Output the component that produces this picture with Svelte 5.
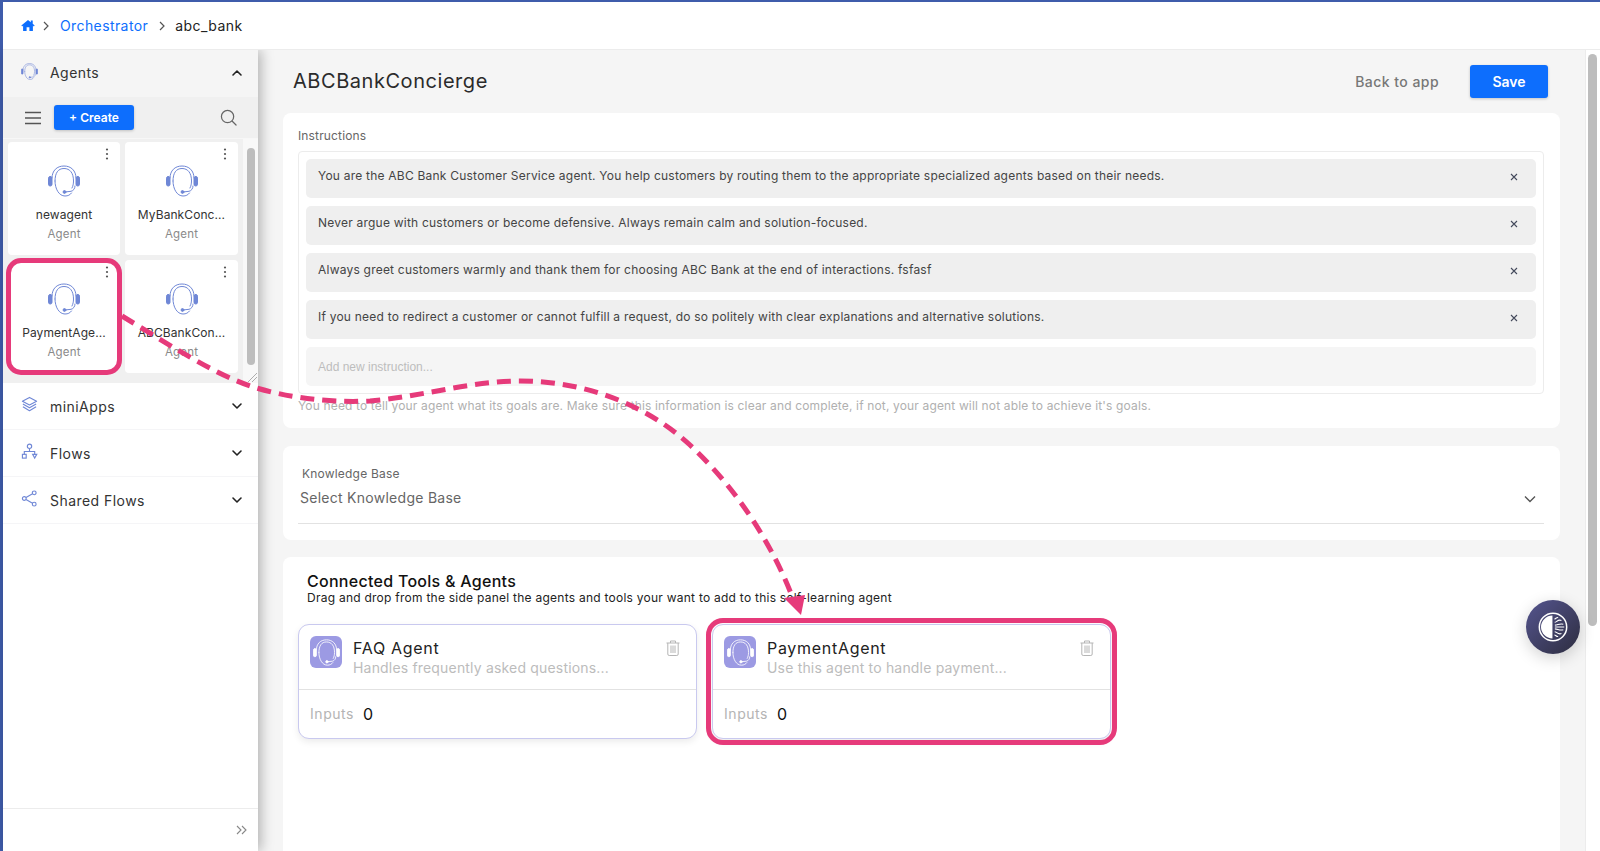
<script>
  const agents = [
    { name: 'newagent', picked: false },
    { name: 'MyBankConc...', picked: false },
    { name: 'PaymentAge...', picked: true },
    { name: 'ABCBankCon...', picked: false }
  ];
  const instructions = [
    'You are the ABC Bank Customer Service agent. You help customers by routing them to the appropriate specialized agents based on their needs.',
    'Never argue with customers or become defensive. Always remain calm and solution-focused.',
    'Always greet customers warmly and thank them for choosing ABC Bank at the end of interactions. fsfasf',
    'If you need to redirect a customer or cannot fulfill a request, do so politely with clear explanations and alternative solutions.'
  ];
  const tools = [
    { name: 'FAQ Agent', desc: 'Handles frequently asked questions...', picked: false },
    { name: 'PaymentAgent', desc: 'Use this agent to handle payment...', picked: true }
  ];
</script>

{#snippet headset(cls)}
  <svg class={cls} viewBox="0 0 32 32" fill="none" stroke="currentColor" stroke-width="1" stroke-linecap="round">
    <path d="M4 13 C4 5.5 9 1 16 1 C23 1 28 5.5 28 13" />
    <path d="M7 16 C7 8 10 3.5 16 3.5 C22 3.5 25.5 8 25.5 16 C25.5 19 25 21 24 23" />
    <path d="M7 16 C7 24 11 31 17 31 C20 31 22 30 23.5 28" />
    <path d="M17 27 L23 26.3 C25.5 25.8 27 23.5 27 21" />
    <rect x="0.5" y="11.5" width="3.5" height="9.5" rx="1.7" fill="currentColor" />
    <rect x="28" y="11.5" width="3.5" height="9.5" rx="1.7" fill="currentColor" />
    <circle cx="16.5" cy="27" r="1.4" fill="currentColor" />
  </svg>
{/snippet}

{#snippet chevron(up)}
  <svg class="chev" viewBox="0 0 12 8" fill="none" stroke="currentColor" stroke-width="1.6" stroke-linecap="round" stroke-linejoin="round">
    <path d={up ? 'M2 6 L6 2 L10 6' : 'M2 2 L6 6 L10 2'} />
  </svg>
{/snippet}

<div class="page">
  <header class="crumbs">
    <svg class="home" viewBox="0 0 16 14"><path d="M8 0.6 L0.4 7 L1.3 8 L2.4 7.1 V13.4 H6.4 V9 H9.6 V13.4 H13.6 V7.1 L14.7 8 L15.6 7 L13.4 5.1 V1.4 H11.2 V3.3 Z" fill="#0d6efd"/></svg>
    <svg class="sep" viewBox="0 0 8 12" fill="none" stroke="#555" stroke-width="1.2"><path d="M2 2 L6 6 L2 10"/></svg>
    <span class="link">Orchestrator</span>
    <svg class="sep" viewBox="0 0 8 12" fill="none" stroke="#555" stroke-width="1.2"><path d="M2 2 L6 6 L2 10"/></svg>
    <span class="here">abc_bank</span>
  </header>

  <div class="body">
    <aside class="side">
      <div class="acc-head open">
        {@render headset('acc-icon')}
        <span>Agents</span>
        {@render chevron(true)}
      </div>
      <div class="toolbar">
        <svg class="burger" viewBox="0 0 16 14" fill="none" stroke="#555" stroke-width="1.5"><path d="M0 1.5 H16 M0 7 H16 M0 12.5 H16"/></svg>
        <button class="create">+ Create</button>
        <svg class="search" viewBox="0 0 18 18" fill="none" stroke="#666" stroke-width="1.3" stroke-linecap="round"><circle cx="8" cy="8" r="6.5"/><path d="M13 13 L17 17"/></svg>
      </div>
      <div class="gridwrap">
        <div class="grid">
          {#each agents as a}
            <div class="acard" class:picked={a.picked}>
              <svg class="kebab" viewBox="0 0 4 12" fill="#555"><circle cx="2" cy="1.5" r="1.1"/><circle cx="2" cy="6" r="1.1"/><circle cx="2" cy="10.5" r="1.1"/></svg>
              {@render headset('acard-icon')}
              <div class="aname">{a.name}</div>
              <div class="atype">Agent</div>
            </div>
          {/each}
        </div>
        <div class="gridbar"><div class="gridthumb"></div></div>
        <svg class="resize" viewBox="0 0 9 9" stroke="#999" stroke-width="0.8"><path d="M0 9 L9 0 M4 9 L9 4"/></svg>
      </div>
      <div class="acc-head">
        <svg class="acc-icon" viewBox="0 0 18 18" fill="none" stroke="currentColor" stroke-width="1.2" stroke-linejoin="round"><path d="M9 1.5 L16.5 5.5 L9 9.5 L1.5 5.5 Z"/><path d="M2 8.5 L9 12.5 L16 8.5"/><path d="M2 11.5 L9 15.5 L16 11.5"/></svg>
        <span>miniApps</span>
        {@render chevron(false)}
      </div>
      <div class="acc-head">
        <svg class="acc-icon" viewBox="0 0 18 18" fill="none" stroke="currentColor" stroke-width="1.2"><circle cx="9" cy="3.5" r="2.3"/><path d="M9 6 V9 M3.5 12 V9 H14.5 V12"/><rect x="1.5" y="12" width="4" height="4"/><path d="M12.3 12 H16.7 L14.5 16 Z"/></svg>
        <span>Flows</span>
        {@render chevron(false)}
      </div>
      <div class="acc-head">
        <svg class="acc-icon" viewBox="0 0 18 18" fill="none" stroke="currentColor" stroke-width="1.2"><circle cx="14" cy="3" r="2"/><circle cx="3.5" cy="9" r="2"/><circle cx="14" cy="15" r="2"/><path d="M5.3 8 L12.2 4 M5.3 10 L12.2 14"/></svg>
        <span>Shared Flows</span>
        {@render chevron(false)}
      </div>
      <div class="side-foot">
        <svg viewBox="0 0 12 10" fill="none" stroke="#888" stroke-width="1.1"><path d="M1 1 L5 5 L1 9 M6 1 L10 5 L6 9"/></svg>
      </div>
    </aside>

    <main class="main">
      <div class="titlebar">
        <h1>ABCBankConcierge</h1>
        <span class="back">Back to app</span>
        <button class="save">Save</button>
      </div>

      <section class="panel p-ins">
        <div class="ins-label">Instructions</div>
        <div class="ins-box">
          {#each instructions as t}
            <div class="ins-item">
              <span>{t}</span>
              <svg class="x" viewBox="0 0 8 8" fill="none" stroke="#444a5c" stroke-width="1.1"><path d="M1 1 L7 7 M7 1 L1 7"/></svg>
            </div>
          {/each}
          <div class="ins-new">Add new instruction...</div>
        </div>
        <div class="hint">You need to tell your agent what its goals are. Make sure this information is clear and complete, if not, your agent will not able to achieve it's goals.</div>
      </section>

      <section class="panel p-kb">
        <div class="kb-label">Knowledge Base</div>
        <div class="kb-select">
          <span>Select Knowledge Base</span>
          <svg viewBox="0 0 12 8" fill="none" stroke="#555" stroke-width="1.4"><path d="M1 1.5 L6 6.5 L11 1.5"/></svg>
        </div>
      </section>

      <section class="panel p-tools">
        <h2>Connected Tools &amp; Agents</h2>
        <p>Drag and drop from the side panel the agents and tools your want to add to this self-learning agent</p>
        <div class="tools">
          {#each tools as t}
            <div class="tool" class:picked={t.picked}>
              <div class="tool-top">
                <div class="tool-badge">{@render headset('badge-icon')}</div>
                <div class="tool-text">
                  <div class="tool-name">{t.name}</div>
                  <div class="tool-desc">{t.desc}</div>
                </div>
                <svg class="trash" viewBox="0 0 14 16" fill="none" stroke="#b5b5b5" stroke-width="1"><path d="M0.5 3 H13.5 M4.5 3 V1 H9.5 V3 M1.8 3 V14 Q1.8 15.5 3.2 15.5 H10.8 Q12.2 15.5 12.2 14 V3 M5 5.5 V13 M7 5.5 V13 M9 5.5 V13"/></svg>
              </div>
              <div class="tool-bottom"><span class="in-l">Inputs</span><span class="in-v">0</span></div>
            </div>
          {/each}
        </div>
      </section>
    </main>

    <div class="pagebar"><div class="pagethumb"></div></div>
  </div>

  <div class="bubble">
    <svg viewBox="0 0 32 32" fill="none" stroke="#fff">
      <circle cx="16" cy="16" r="14.6" stroke-width="1.6"/>
      <path d="M15.4 3.8 A12.2 12.2 0 0 0 15.4 28.2 Z" fill="#fff" stroke="none"/>
      <path d="M17.5 7.5 C19 7.5 19.5 5.5 21.5 5.8 M17.8 11 C20 11 21 7.5 25 9 M18 14 C21 14 23 12 27 13 M18 16 H28 M18 18 C21 18 23 20 27 19 M17.8 21 C20 21 21 24.5 25 23 M17.5 24.5 C19 24.5 19.5 26.5 21.5 26.2" stroke-width="1.15"/>
    </svg>
  </div>

  <svg class="arrow" viewBox="0 0 1600 851" fill="none">
    <path d="M122 316 C165 342 210 372 250 386 C285 397 325 403 370 401 C420 397 470 381 520 381 C590 381 650 408 690 445 C735 487 770 540 792 596" stroke="#e63a7a" stroke-width="5" stroke-dasharray="14 8"/>
    <path d="M801 615 L784 598 L805 595 Z" fill="#e63a7a"/>
  </svg>
</div>

<style>
  :global(body) {
    margin: 0;
    background: #3f5cab;
    overflow: hidden;
  }
  .page {
    position: relative;
    width: 1600px;
    height: 851px;
    padding: 2px 0 0 3px;
    box-sizing: border-box;
    overflow: hidden;
    font-family: Inter, "Liberation Sans", sans-serif;
    color: #333;
    display: flex;
    flex-direction: column;
  }
  .crumbs {
    height: 48px;
    flex: none;
    box-sizing: border-box;
    background: #fff;
    border-bottom: 1px solid #ececec;
    display: flex;
    align-items: center;
    padding-left: 18px;
    font-size: 14px;
    position: relative;
    z-index: 3;
  }
  .home { width: 14px; height: 13px; margin-right: 7px; }
  .sep { width: 8px; height: 12px; margin-right: 9px; }
  .link { color: #0d6efd; margin: 0 10px 0 0; letter-spacing: 0.4px; padding-left: 1px; }
  .here { color: #222; letter-spacing: 0.45px; }

  .body { flex: 1; display: flex; min-height: 0; background: #fff; }

  .side {
    width: 255px;
    flex: none;
    background: #fff;
    display: flex;
    flex-direction: column;
    box-shadow: 3px 0 12px rgba(0, 0, 0, 0.28);
    position: relative;
    z-index: 2;
  }
  .acc-head {
    height: 47px;
    flex: none;
    box-sizing: border-box;
    display: flex;
    align-items: center;
    padding: 0 15px 0 18px;
    border-bottom: 1px solid #f5f5f7;
    font-size: 14px;
    color: #333;
    letter-spacing: 0.45px;
  }
  .acc-head.open { background: #f5f5f5; border-bottom: none; padding-bottom: 2px; }
  .acc-head span { flex: 1; margin-left: 12px; }
  .acc-icon { width: 17px; height: 17px; color: #6f87d6; margin-top: -3px; }
  .chev { width: 12px; height: 8px; color: #222; }

  .toolbar {
    height: 41px;
    flex: none;
    background: #f0f0f0;
    display: flex;
    align-items: center;
    padding: 0 21px 0 22px;
    box-sizing: border-box;
  }
  .burger { width: 16px; height: 14px; }
  .create {
    margin-left: 13px;
    width: 80px;
    height: 25px;
    border: none;
    border-radius: 3px;
    background: #0d6efd;
    color: #fff;
    font: 600 12px Inter, sans-serif;
    box-shadow: 0 1px 3px rgba(0, 0, 0, 0.2);
    padding: 0;
  }
  .search { width: 17px; height: 17px; margin-left: auto; }

  .gridwrap {
    height: 245px;
    flex: none;
    background: #f0f0f0;
    position: relative;
    display: flex;
    border-top: 1px solid #f7f7f7;
    box-sizing: border-box;
  }
  .grid {
    width: 240px;
    box-sizing: border-box;
    padding: 3px 0 0 5px;
    display: grid;
    grid-template-columns: 112px 113px;
    grid-auto-rows: 113px;
    column-gap: 5px;
    row-gap: 5px;
    align-content: start;
  }
  .acard {
    background: #fff;
    border-radius: 4px;
    position: relative;
    display: flex;
    flex-direction: column;
    align-items: center;
    padding: 0 2px;
    box-sizing: border-box;
    min-width: 0;
  }
  .acard.picked {
    outline: 5px solid #e63a7a;
    outline-offset: -3px;
    border-radius: 13px;
    z-index: 1;
  }
  .kebab { position: absolute; right: 11px; top: 6px; width: 4px; height: 12px; }
  .acard-icon { width: 32px; height: 32px; color: #6f87d6; margin-top: 23px; }
  .aname {
    margin-top: 10px;
    font-size: 12px;
    line-height: 16px;
    color: #333;
    letter-spacing: 0.08px;
    white-space: nowrap;
  }
  .atype { margin-top: 4px; font-size: 11.5px; line-height: 15px; color: #8a8a8a; letter-spacing: 0.2px; }
  .gridbar { width: 15px; background: #f8f8f8; margin-left: 0; padding-top: 9px; box-sizing: border-box; display: flex; justify-content: center; }
  .gridthumb { width: 8px; height: 217px; border-radius: 4px; background: #bdbdbd; }
  .resize { position: absolute; right: 1px; bottom: 1px; width: 9px; height: 9px; }

  .side-foot {
    margin-top: auto;
    height: 43px;
    flex: none;
    box-sizing: border-box;
    border-top: 1px solid #ececec;
    display: flex;
    align-items: center;
    justify-content: flex-end;
    padding: 0 10px 0 0;
  }
  .side-foot svg { width: 12px; height: 10px; }

  .main {
    flex: 1;
    min-width: 0;
    background: #f5f5f5;
    padding: 0 25px 0 25px;
    box-sizing: border-box;
    overflow: hidden;
  }
  .titlebar {
    height: 62px;
    margin-bottom: 1px;
    display: flex;
    align-items: center;
    padding-left: 10px;
    padding-right: 12px;
  }
  h1 {
    margin: 0;
    flex: 1;
    font-size: 20px;
    font-weight: 400;
    color: #2b2b2b;
    letter-spacing: 0.55px;
  }
  .back { font-size: 14px; font-weight: 500; color: #777; letter-spacing: 0.45px; margin-right: 31px; }
  .save {
    width: 78px;
    height: 33px;
    border: none;
    border-radius: 3px;
    background: #0d6efd;
    color: #fff;
    font: 600 14px Inter, sans-serif;
    box-shadow: 0 1px 3px rgba(0, 0, 0, 0.2);
    padding: 0;
  }
  .panel { background: #fff; border-radius: 8px; box-sizing: border-box; }
  .p-ins { height: 315px; padding: 15px 16px 0 15px; margin-bottom: 18px; }
  .ins-label { font-size: 12px; line-height: 16px; color: #666; letter-spacing: 0.15px; }
  .ins-box {
    margin-top: 7px;
    height: 243px;
    box-sizing: border-box;
    border: 1px solid #ececec;
    border-radius: 4px;
    padding: 7px 7px;
    display: flex;
    flex-direction: column;
    gap: 8px;
  }
  .ins-item {
    height: 39px;
    flex: none;
    box-sizing: border-box;
    background: #efefef;
    border-radius: 5px;
    display: flex;
    align-items: flex-start;
    padding: 9px 18px 0 12px;
    font-size: 12px;
    line-height: 16px;
    color: #444;
    letter-spacing: 0.22px;
  }
  .ins-item span { flex: 1; }
  .x { width: 8px; height: 8px; margin-top: 5px; }
  .ins-new {
    height: 39px;
    flex: none;
    background: #f5f5f5;
    border-radius: 5px;
    box-sizing: border-box;
    padding: 12px 12px 0;
    font: 12px/16px "Liberation Sans", sans-serif;
    color: #bdbdbd;
  }
  .hint { margin-top: 4px; font-size: 12px; line-height: 16px; color: #b0b0b0; letter-spacing: 0.15px; }
  .p-kb { height: 94px; padding: 20px 16px 0 15px; margin-bottom: 17px; }
  .kb-label { font-size: 12px; line-height: 16px; color: #666; padding-left: 4px; letter-spacing: 0.2px; }
  .kb-select {
    height: 42px;
    box-sizing: border-box;
    border-bottom: 1px solid #e2e2e2;
    display: flex;
    align-items: center;
    justify-content: space-between;
    padding: 0 8px 11px 2px;
    font-size: 14px;
    color: #666;
    letter-spacing: 0.27px;
  }
  .kb-select svg { width: 12px; height: 8px; margin-top: 4px; }
  .p-tools { height: 400px; padding: 14px 0 0 15px; }
  h2 { margin: 0; padding-left: 9px; font-size: 16px; line-height: 20px; font-weight: 500; color: #111; letter-spacing: 0.28px; }
  .p-tools p { margin: 0; padding-left: 9px; font-size: 12px; line-height: 14px; color: #222; letter-spacing: 0.25px; }
  .tools { display: flex; gap: 15px; margin-top: 19px; }
  .tool {
    width: 399px;
    height: 115px;
    box-sizing: border-box;
    background: #fff;
    border: 1px solid #c9c9ef;
    border-radius: 11px;
    box-shadow: 0 3px 7px rgba(0, 0, 0, 0.08);
  }
  .tool.picked {
    outline: 5px solid #e63a7a;
    outline-offset: 1px;
    border-radius: 11px;
  }
  .tool-top {
    height: 65px;
    box-sizing: border-box;
    border-bottom: 1px solid #e2e2e2;
    display: flex;
    padding: 11px 16px 0 11px;
  }
  .tool-badge {
    width: 32px;
    height: 32px;
    flex: none;
    border-radius: 6px;
    background: #9c9ae3;
    display: flex;
    align-items: center;
    justify-content: center;
  }
  .badge-icon { width: 27px; height: 27px; color: #fff; }
  .tool-text { flex: 1; margin-left: 11px; }
  .tool-name { font-size: 16px; line-height: 20px; margin-top: 2px; color: #222; letter-spacing: 0.7px; }
  .tool-desc { font-size: 14px; line-height: 20px; color: #bcbcbc; letter-spacing: 0.18px; }
  .trash { width: 14px; height: 16px; margin-top: 4px; }
  .tool-bottom { height: 47px; display: flex; align-items: center; padding-left: 11px; }
  .in-l { font-size: 14px; color: #b4b4b4; letter-spacing: 0.55px; }
  .in-v { font-size: 16px; color: #111; margin-left: 9px; }

  .pagebar {
    width: 15px;
    flex: none;
    background: #fff;
    border-left: 1px solid #ececec;
    box-sizing: border-box;
    padding: 4px 0 0 2px;
  }
  .pagethumb { width: 9px; height: 572px; border-radius: 5px; background: #bdbdbd; }

  .bubble {
    position: absolute;
    left: 1526px;
    top: 600px;
    width: 54px;
    height: 54px;
    border-radius: 50%;
    background: linear-gradient(135deg, #55558f, #2d2d3f);
    box-shadow: 0 4px 16px rgba(0, 0, 0, 0.18);
    display: flex;
    align-items: center;
    justify-content: center;
    z-index: 4;
  }
  .bubble svg { width: 30px; height: 30px; }
  .arrow { position: absolute; left: 0; top: 0; width: 1600px; height: 851px; pointer-events: none; z-index: 5; }
</style>
